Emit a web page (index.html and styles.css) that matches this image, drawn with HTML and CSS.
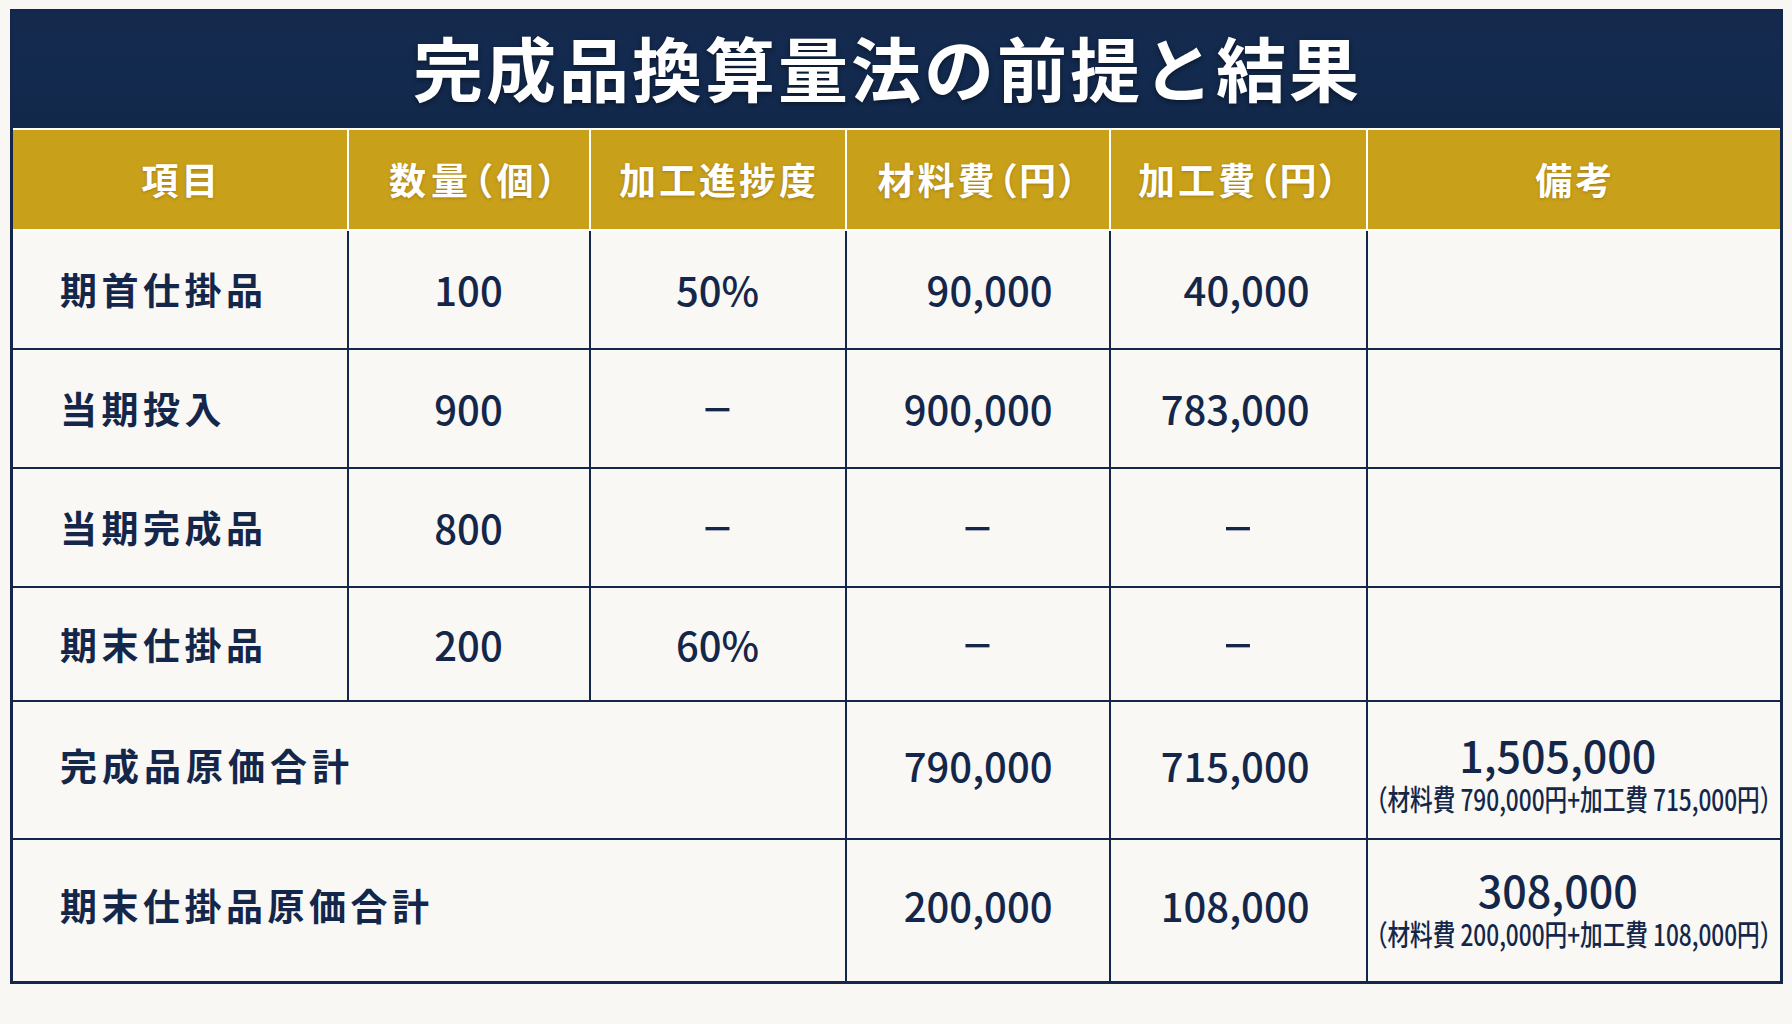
FILE: index.html
```html
<!DOCTYPE html>
<html lang="ja">
<head>
<meta charset="utf-8">
<title>完成品換算量法の前提と結果</title>
<link rel="stylesheet" href="styles.css">
</head>
<body>
<table class="sheet">
  <colgroup>
    <col class="w-item"><col class="w-qty"><col class="w-prog"><col class="w-mat"><col class="w-proc"><col class="w-note">
  </colgroup>
  <thead>
    <tr class="title-row"><th colspan="6" class="title">完成品換算量法の前提と結果</th></tr>
    <tr class="head-row">
      <th>項目</th><th class="paren">数量（個）</th><th>加工進捗度</th><th>材料費（円）</th><th>加工費（円）</th><th>備考</th>
    </tr>
  </thead>
  <tbody>
    <tr class="row-std">
      <td class="label">期首仕掛品</td><td class="ctr">100</td><td class="ctr">50%</td><td class="num">90,000</td><td class="num">40,000</td><td></td>
    </tr>
    <tr class="row-std">
      <td class="label">当期投入</td><td class="ctr">900</td><td class="dash">–</td><td class="num">900,000</td><td class="num">783,000</td><td></td>
    </tr>
    <tr class="row-std">
      <td class="label">当期完成品</td><td class="ctr">800</td><td class="dash">–</td><td class="dash">–</td><td class="dash">–</td><td></td>
    </tr>
    <tr class="row-short">
      <td class="label">期末仕掛品</td><td class="ctr">200</td><td class="ctr">60%</td><td class="dash">–</td><td class="dash">–</td><td></td>
    </tr>
    <tr class="row-total">
      <td class="label wide" colspan="3">完成品原価合計</td><td class="num">790,000</td><td class="num">715,000</td>
      <td class="note"><div class="note-box"><div class="note-big">1,505,000</div><div class="note-sub">（材料費 790,000円+加工費 715,000円）</div></div></td>
    </tr>
    <tr class="row-last">
      <td class="label" colspan="3">期末仕掛品原価合計</td><td class="num">200,000</td><td class="num">108,000</td>
      <td class="note"><div class="note-box"><div class="note-big">308,000</div><div class="note-sub">（材料費 200,000円+加工費 108,000円）</div></div></td>
    </tr>
  </tbody>
</table>
</body>
</html>
```
FILE: styles.css
```css
html, body {
  margin: 0;
  padding: 0;
  background: #f8f7f3;
}
body {
  padding: 9px 0 0 10px;
  font-family: "Noto Sans CJK JP", "Noto Sans", sans-serif;
  color: #14274a;
}
.sheet {
  width: 1770px;
  border-collapse: collapse;
  table-layout: fixed;
  border: 3px solid #14274a;
  background: #f9f8f4;
}
.w-item { width: 336px; }
.w-qty { width: 242px; }
.w-prog { width: 256px; }
.w-mat { width: 264px; }
.w-proc { width: 257px; }
.w-note { width: 415px; }

.title-row { height: 118px; }
.title {
  background: linear-gradient(180deg, #14294c 0%, #132a4f 50%, #12284a 100%);
  color: #ffffff;
  font-size: 70px;
  font-weight: 700;
  letter-spacing: 3px;
  padding: 0 18px 6px 0;
  text-shadow: 0 2px 5px rgba(0, 0, 0, 0.45);
  border: 0;
  border-bottom: 2px solid #ffffff;
}
.head-row { height: 101px; }
.head-row th {
  background: #c9a01a;
  color: #ffffff;
  font-size: 37px;
  font-weight: 700;
  letter-spacing: 3px;
  font-feature-settings: "palt";
  padding: 0 0 0 3px;
  border: 2px solid #ffffff;
  text-shadow: 0 1px 3px rgba(90, 60, 0, 0.35);
}
.head-row th.paren {
  letter-spacing: 5px;
  padding-left: 14px;
}
td {
  border: 2px solid #14274a;
  padding: 0;
  vertical-align: middle;
}
.row-std { height: 119px; }
.row-short { height: 114px; }
.row-total { height: 138px; }
.row-last { height: 144px; }

.label {
  padding-left: 47px;
  font-size: 37px;
  font-weight: 700;
  letter-spacing: 4.5px;
}
.label.wide { letter-spacing: 5px; }
.ctr {
  text-align: center;
  font-size: 40px;
  font-weight: 500;
}
.num {
  text-align: right;
  padding-right: 56px;
  font-size: 40px;
  font-weight: 500;
}
.row-total .label, .row-total .num,
.row-last .label, .row-last .num {
  padding-bottom: 10px;
}
.dash {
  text-align: center;
  font-size: 54px;
  font-weight: 400;
  line-height: 1;
  padding-bottom: 12px;
}
.note {
  padding: 6px 0 0 0;
}
.row-last .note {
  padding: 0 0 6px 0;
}
.note-box {
  display: flex;
  flex-direction: column;
  align-items: center;
}
.note-big {
  font-size: 43px;
  font-weight: 500;
  line-height: 48px;
  padding-right: 32px;
}
.note-sub {
  font-size: 29px;
  font-weight: 500;
  line-height: 34px;
  padding-top: 3px;
  white-space: nowrap;
  transform: scaleX(0.78);
}
```
